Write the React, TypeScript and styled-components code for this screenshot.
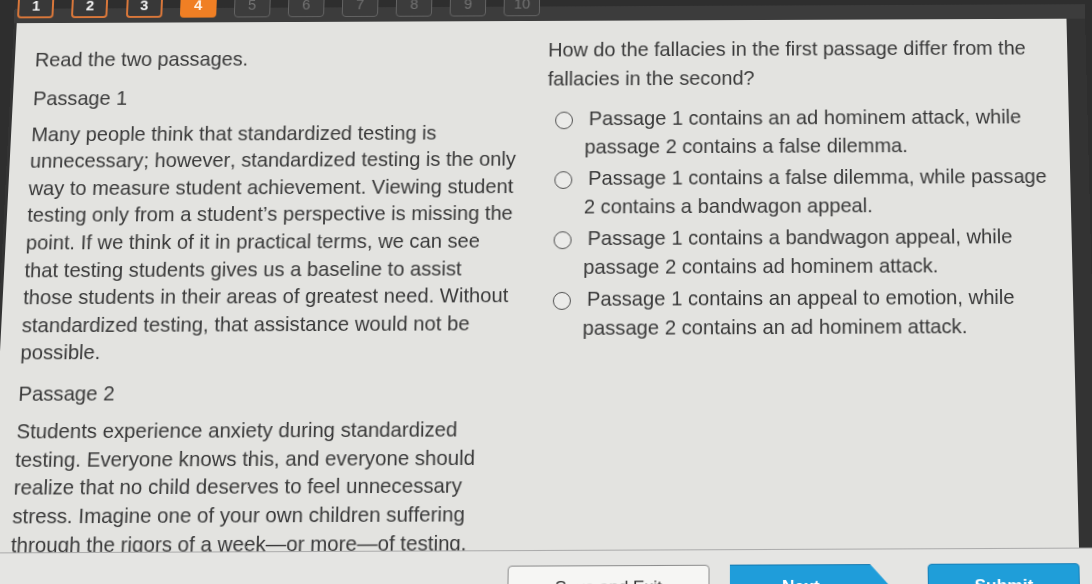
import React from "react";
import styled, { createGlobalStyle, css } from "styled-components";

const GlobalStyle = createGlobalStyle`
  html, body {
    margin: 0;
    padding: 0;
  }
  body {
    width: 1092px;
    height: 584px;
    overflow: hidden;
    background: #2e2e2e;
    font-family: "Liberation Sans", Arial, Helvetica, sans-serif;
  }
`;

// the reference is a photo of a monitor, so the whole screen is tilted a little
const Screen = styled.div`
  width: 1092px;
  height: 584px;
  display: flex;
  flex-direction: column;
  background: #3b3b3b;
  transform: perspective(1000px) rotateX(4deg) rotate(-0.25deg) skewX(-1deg);
  transform-origin: 50% 50%;
`;

const TopBar = styled.div`
  height: 15px;
  flex: none;
  display: flex;
  align-items: flex-start;
  gap: 18.1px;
  padding-left: 3.4px;
  background: #3c3c3c;
`;

const Tab = styled.div<{ $state: "done" | "current" | "todo" }>`
  width: 37px;
  height: 28px;
  margin-top: -18px;
  box-sizing: border-box;
  border-radius: 4px;
  display: flex;
  align-items: center;
  justify-content: center;
  font-size: 15px;
  font-weight: bold;
  ${(p) =>
    p.$state === "done" &&
    css`
      border: 2px solid #d9773a;
      background: #383838;
      color: #f2f2f2;
    `}
  ${(p) =>
    p.$state === "current" &&
    css`
      border: 2px solid #f07f24;
      background: #f07f24;
      color: #fff3e6;
    `}
  ${(p) =>
    p.$state === "todo" &&
    css`
      border: 1.5px solid #646464;
      background: #3c3c3c;
      color: #737373;
      font-weight: normal;
    `}
`;

const Main = styled.div`
  height: 531px;
  flex: none;
  display: flex;
`;

const Strip = styled.div<{ $w: number }>`
  width: ${(p) => p.$w}px;
  flex: none;
  background: #333333;
`;

const Panel = styled.div`
  flex: 1;
  display: flex;
  padding-left: 20.5px;
  background: #e3e3e0;
  color: #393939;
  font-size: 20.2px;
  font-kerning: none;
`;

const PassageColumn = styled.div`
  flex: none;
  width: 491.7px;
  padding-top: 25px;
  line-height: 27.6px;
`;

const Prompt = styled.p`
  margin: 0 0 12px;
`;

const PassageTitle = styled.p`
  margin: 0 0 9.5px;
`;

const PassageText = styled.p`
  margin: 0 0 13px;
`;

const QuestionColumn = styled.div`
  flex: none;
  width: 513px;
  margin-left: 29.8px;
  padding-top: 16px;
  line-height: 29.5px;
`;

const Question = styled.p`
  margin: 0 0 11.5px;
`;

const Option = styled.label`
  display: block;
  padding-left: 38px;
  text-indent: -30px;
  margin-bottom: 2px;
  cursor: pointer;
`;

const Radio = styled.span`
  display: inline-block;
  width: 18px;
  height: 18px;
  box-sizing: border-box;
  margin-right: 16px;
  vertical-align: -4px;
  border: 1.6px solid #4f4f4f;
  border-radius: 50%;
  background: #ebebe9;
  text-indent: 0;
`;

const Footer = styled.div`
  flex: 1;
  display: flex;
  align-items: flex-start;
  gap: 20px;
  padding: 13.5px 0 0 512px;
  background: #e5e5e3;
  border-top: 1px solid #acacac;
`;

const FooterButton = styled.button<{ $kind: "plain" | "next" | "submit" }>`
  height: 44px;
  flex: none;
  box-sizing: border-box;
  font-family: inherit;
  font-size: 17px;
  padding: 0;
  ${(p) =>
    p.$kind === "plain" &&
    css`
      width: 198px;
      border: 1px solid #8e8e8e;
      border-radius: 4px;
      background: #f6f6f4;
      color: #333;
    `}
  ${(p) =>
    p.$kind === "next" &&
    css`
      width: 157px;
      border: none;
      padding-right: 18px;
      background: linear-gradient(#1479b0 0 1.5px, #1f9dda 1.5px);
      color: #fff;
      font-weight: bold;
      clip-path: polygon(0 0, 137px 0, 157px 22px, 137px 44px, 0 44px);
    `}
  ${(p) =>
    p.$kind === "submit" &&
    css`
      width: 149px;
      margin-left: 17px;
      border: 1px solid #1780b9;
      border-radius: 4px;
      background: #1f9ed9;
      color: #fff;
      font-weight: bold;
    `}
`;

const tabs = [1, 2, 3, 4, 5, 6, 7, 8, 9, 10];
const current = 4;

const options = [
  "Passage 1 contains an ad hominem attack, while passage 2 contains a false dilemma.",
  "Passage 1 contains a false dilemma, while passage 2 contains a bandwagon appeal.",
  "Passage 1 contains a bandwagon appeal, while passage 2 contains ad hominem attack.",
  "Passage 1 contains an appeal to emotion, while passage 2 contains an ad hominem attack.",
];

export default function App() {
  return (
    <>
      <GlobalStyle />
      <Screen>
        <TopBar>
          {tabs.map((n) => (
            <Tab key={n} $state={n < current ? "done" : n === current ? "current" : "todo"}>
              {n}
            </Tab>
          ))}
        </TopBar>
        <Main>
          <Strip $w={3} />
          <Panel>
            <PassageColumn>
              <Prompt>Read the two passages.</Prompt>
              <PassageTitle>Passage 1</PassageTitle>
              <PassageText>
                Many people think that standardized testing is unnecessary; however, standardized testing is
                the only way to measure student achievement. Viewing student testing only from a student’s
                perspective is missing the point. If we think of it in practical terms, we can see that testing
                students gives us a baseline to assist those students in their areas of greatest need. Without
                standardized testing, that assistance would not be possible.
              </PassageText>
              <PassageTitle>Passage 2</PassageTitle>
              <PassageText>
                Students experience anxiety during standardized testing. Everyone knows this, and everyone
                should realize that no child deserves to feel unnecessary stress. Imagine one of your own
                children suffering through the rigors of a week—or more—of testing.
              </PassageText>
            </PassageColumn>
            <QuestionColumn>
              <Question>How do the fallacies in the first passage differ from the fallacies in the second?</Question>
              {options.map((o) => (
                <Option key={o}>
                  <Radio />
                  {o}
                </Option>
              ))}
            </QuestionColumn>
          </Panel>
          <Strip $w={19} />
        </Main>
        <Footer>
          <FooterButton $kind="plain">Save and Exit</FooterButton>
          <FooterButton $kind="next">Next</FooterButton>
          <FooterButton $kind="submit">Submit</FooterButton>
        </Footer>
      </Screen>
    </>
  );
}
